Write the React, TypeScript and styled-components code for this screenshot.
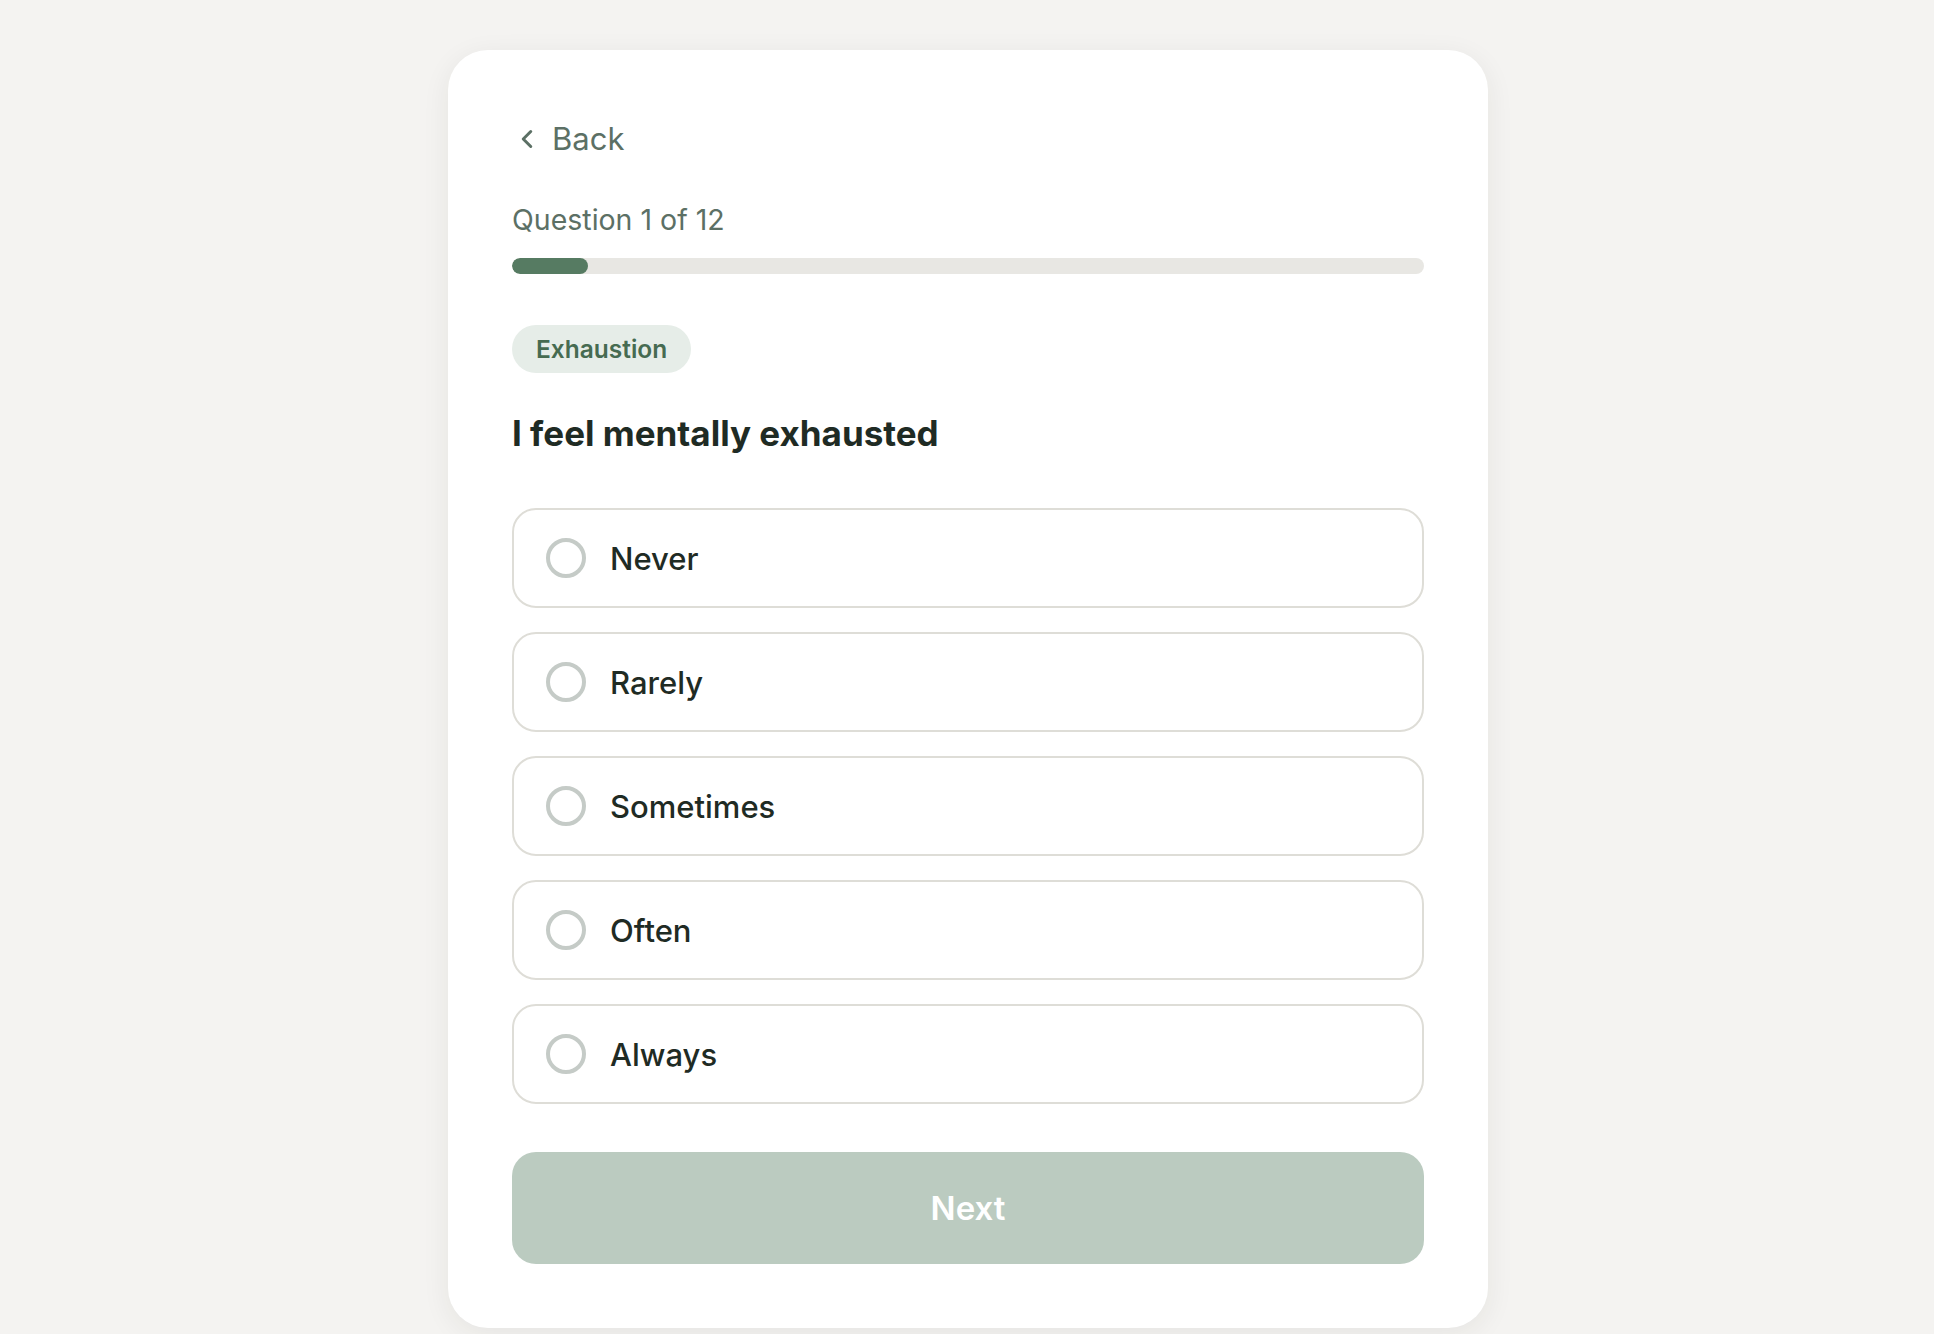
import { createGlobalStyle, styled } from 'styled-components';
import { ChevronLeft } from 'lucide-react';

const GlobalStyle = createGlobalStyle`
  * {
    box-sizing: border-box;
  }

  body {
    margin: 0;
    background: #f4f3f1;
    font-family: Inter, 'Noto Sans', sans-serif;
    color: #1f2b24;
  }
`;

const Page = styled.main`
  display: flex;
  justify-content: center;
  align-items: flex-start;
  padding: 50px 0 0 2px;
  min-height: 100vh;
`;

const Card = styled.section`
  width: 1040px;
  background: #ffffff;
  border-radius: 40px;
  padding: 64px;
  box-shadow: 0 6px 28px rgba(40, 40, 30, 0.07);
  display: flex;
  flex-direction: column;
`;

const BackButton = styled.button`
  display: flex;
  align-items: center;
  gap: 10px;
  align-self: flex-start;
  margin-top: 7px;
  padding: 0;
  border: none;
  background: none;
  font-family: inherit;
  font-size: 31px;
  line-height: 36px;
  color: #5c7065;
  cursor: pointer;
`;

const QuestionCount = styled.div`
  margin-top: 46px;
  font-size: 28.5px;
  line-height: 34px;
  color: #5c7065;
`;

const Track = styled.div`
  margin-top: 21px;
  height: 16px;
  border-radius: 8px;
  background: #e8e7e3;
  overflow: hidden;
`;

const Fill = styled.div`
  height: 100%;
  border-radius: 8px;
  background: #567b62;
`;

const Chip = styled.span`
  align-self: flex-start;
  margin-top: 51px;
  height: 48px;
  padding: 0 24px;
  display: flex;
  align-items: center;
  border-radius: 24px;
  background: #e6ede8;
  color: #466b51;
  font-size: 24.5px;
  font-weight: 600;
`;

const Heading = styled.h1`
  margin: 39px 0 0;
  font-size: 35px;
  line-height: 42px;
  font-weight: 700;
  color: #1f2b24;
`;

const Options = styled.div`
  margin-top: 54px;
  display: flex;
  flex-direction: column;
  gap: 24px;
`;

const Option = styled.label`
  height: 100px;
  display: flex;
  align-items: center;
  gap: 24px;
  padding: 0 32px;
  border: 2px solid #deddd7;
  border-radius: 24px;
  font-size: 31px;
  font-weight: 500;
  color: #1f2b24;
  cursor: pointer;
`;

const Radio = styled.span`
  width: 40px;
  height: 40px;
  flex: none;
  border-radius: 50%;
  border: 4px solid #c5cbc7;
`;

const NextButton = styled.button`
  margin-top: 48px;
  height: 112px;
  border: none;
  border-radius: 24px;
  background: #bbcbc0;
  color: #ffffff;
  font-family: inherit;
  font-size: 33px;
  font-weight: 600;
  cursor: not-allowed;
`;

const answers = ['Never', 'Rarely', 'Sometimes', 'Often', 'Always'];

const App = () => {
  const current = 1;
  const total = 12;

  return (
    <>
      <GlobalStyle />
      <Page>
        <Card>
          <BackButton>
            <ChevronLeft size={30} strokeWidth={2.4} />
            Back
          </BackButton>
          <QuestionCount>
            Question {current} of {total}
          </QuestionCount>
          <Track>
            <Fill style={{ width: `${(current / total) * 100}%` }} />
          </Track>
          <Chip>Exhaustion</Chip>
          <Heading>I feel mentally exhausted</Heading>
          <Options>
            {answers.map((a) => (
              <Option key={a}>
                <Radio />
                {a}
              </Option>
            ))}
          </Options>
          <NextButton disabled>Next</NextButton>
        </Card>
      </Page>
    </>
  );
};

export default App;
